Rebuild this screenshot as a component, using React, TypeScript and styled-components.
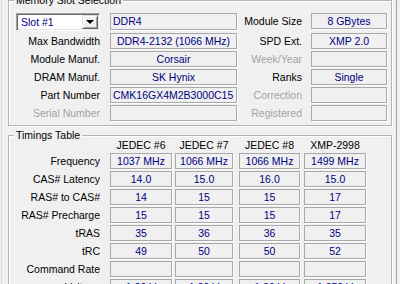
import React from 'react';
import styled, { createGlobalStyle } from 'styled-components';

const SLOT_ROWS = [
  { label: 'Max Bandwidth', value: 'DDR4-2132 (1066 MHz)', center: true, side: 'SPD Ext.', sideValue: 'XMP 2.0' },
  { label: 'Module Manuf.', value: 'Corsair', center: true, side: 'Week/Year', sideValue: '', sideOff: true },
  { label: 'DRAM Manuf.', value: 'SK Hynix', center: true, side: 'Ranks', sideValue: 'Single' },
  { label: 'Part Number', value: 'CMK16GX4M2B3000C15', center: false, side: 'Correction', sideValue: '', sideOff: true },
  { label: 'Serial Number', value: '', off: true, center: false, side: 'Registered', sideValue: '', sideOff: true },
];

const COLUMNS = ['JEDEC #6', 'JEDEC #7', 'JEDEC #8', 'XMP-2998'];
const CELL_WIDTHS = [62, 58, 61, 62];

const TIMINGS = [
  { label: 'Frequency', values: ['1037 MHz', '1066 MHz', '1066 MHz', '1499 MHz'] },
  { label: 'CAS# Latency', values: ['14.0', '15.0', '16.0', '15.0'] },
  { label: 'RAS# to CAS#', values: ['14', '15', '15', '17'] },
  { label: 'RAS# Precharge', values: ['15', '15', '15', '17'] },
  { label: 'tRAS', values: ['35', '36', '36', '35'] },
  { label: 'tRC', values: ['49', '50', '50', '52'] },
  { label: 'Command Rate', values: ['', '', '', ''] },
  { label: 'Voltage', values: ['1.20 V', '1.20 V', '1.20 V', '1.350 V'] },
];

export default function App() {
  return (
    <>
      <GlobalStyle />
      <Frame>
        <Group>
          <GroupTitle>Memory Slot Selection</GroupTitle>
          <SlotGrid>
            <Combo>
              <ComboText>Slot #1</ComboText>
              <ComboButton>
                <Arrow />
              </ComboButton>
            </Combo>
            <Field $tall>DDR4</Field>
            <Label $pad={9}>Module Size</Label>
            <Field $center>8 GBytes</Field>

            {SLOT_ROWS.map((row) => (
              <React.Fragment key={row.label}>
                <Label $pad={10} $off={row.off}>{row.label}</Label>
                <Field $center={row.center}>{row.value}</Field>
                <Label $pad={9} $off={row.sideOff}>{row.side}</Label>
                <Field $center>{row.sideValue}</Field>
              </React.Fragment>
            ))}
          </SlotGrid>
        </Group>

        <TimingsGroup>
          <GroupTitle>Timings Table</GroupTitle>
          <TimingsGrid>
            <span />
            {COLUMNS.map((col, i) => (
              <ColHead key={col} $w={CELL_WIDTHS[i]}>{col}</ColHead>
            ))}
            {TIMINGS.map((row) => (
              <React.Fragment key={row.label}>
                <Label $pad={10}>{row.label}</Label>
                {row.values.map((v, i) => (
                  <Cell key={i} $w={CELL_WIDTHS[i]}>{v}</Cell>
                ))}
              </React.Fragment>
            ))}
          </TimingsGrid>
        </TimingsGroup>
      </Frame>
    </>
  );
}

const GlobalStyle = createGlobalStyle`
  html, body {
    margin: 0;
    background: #f0f0f0;
    overflow: hidden;
  }
  body {
    font-family: "Liberation Sans", Arial, sans-serif;
    font-size: 10.5px;
    color: #000;
  }
`;

const Frame = styled.div`
  margin-left: 1px;
  width: 396px;
  height: 300px;
  box-sizing: border-box;
  border-left: 1px solid #dadada;
  border-right: 1px solid #a0a0a0;
  padding: 0 4px 0 6px;
`;

const Group = styled.div`
  position: relative;
  border: 1px solid #b4b4b4;
  box-shadow: inset 1px 1px 0 #fff, 1px 1px 0 #fff;
  padding: 12px 4px 4px 7px;
`;

const TimingsGroup = styled(Group)`
  margin-top: 9px;
  padding-top: 3px;
`;

const GroupTitle = styled.div`
  position: absolute;
  top: -7px;
  left: 5px;
  padding: 0 2px;
  background: #f0f0f0;
  line-height: 13px;
`;

const SlotGrid = styled.div`
  display: grid;
  grid-template-columns: 94px 127px 74px 76px;
  grid-template-rows: 18px repeat(5, 16px);
  row-gap: 2px;
  align-items: start;
`;

const Label = styled.div<{ $pad: number; $off?: boolean }>`
  height: 16px;
  line-height: 17px;
  text-align: right;
  white-space: nowrap;
  padding-right: ${(p) => p.$pad}px;
  color: ${(p) => (p.$off ? '#a3a3a3' : '#000')};
`;

const Field = styled.div<{ $center?: boolean; $tall?: boolean }>`
  box-sizing: border-box;
  height: ${(p) => (p.$tall ? 17 : 16)}px;
  line-height: ${(p) => (p.$tall ? 15 : 14)}px;
  border: 1px solid #a9a9a9;
  box-shadow: 1px 1px 0 #fff;
  color: #00007f;
  white-space: nowrap;
  overflow: hidden;
  padding: 0 2px;
  text-align: ${(p) => (p.$center ? 'center' : 'left')};
`;

const Combo = styled.div`
  box-sizing: border-box;
  width: 84px;
  height: 18px;
  display: flex;
  align-items: stretch;
  background: #fff;
  border-style: solid;
  border-width: 1px;
  border-color: #a0a0a0 #fff #fff #a0a0a0;
  box-shadow: inset 1px 1px 0 #696969, inset -1px -1px 0 #e3e3e3;
  padding: 1px;
`;

const ComboText = styled.div`
  flex: 1;
  padding-left: 3px;
  line-height: 15px;
  color: #00007f;
`;

const ComboButton = styled.div`
  box-sizing: border-box;
  width: 16px;
  display: flex;
  align-items: center;
  justify-content: center;
  background: #f0f0f0;
  border-style: solid;
  border-width: 1px;
  border-color: #e3e3e3 #696969 #696969 #e3e3e3;
  box-shadow: inset 1px 1px 0 #fff, inset -1px -1px 0 #a0a0a0;
`;

const Arrow = styled.div`
  width: 0;
  height: 0;
  border-left: 4px solid transparent;
  border-right: 4px solid transparent;
  border-top: 4px solid #000;
`;

const TimingsGrid = styled.div`
  display: grid;
  grid-template-columns: 94px 65px 64px 65px 62px;
  grid-template-rows: 12px;
  grid-auto-rows: 16px;
  row-gap: 2px;
  align-items: start;
`;

const ColHead = styled.div<{ $w: number }>`
  width: ${(p) => p.$w}px;
  line-height: 13px;
  text-align: center;
  white-space: nowrap;
`;

const Cell = styled(Field)<{ $w: number }>`
  width: ${(p) => p.$w}px;
  text-align: center;
`;
